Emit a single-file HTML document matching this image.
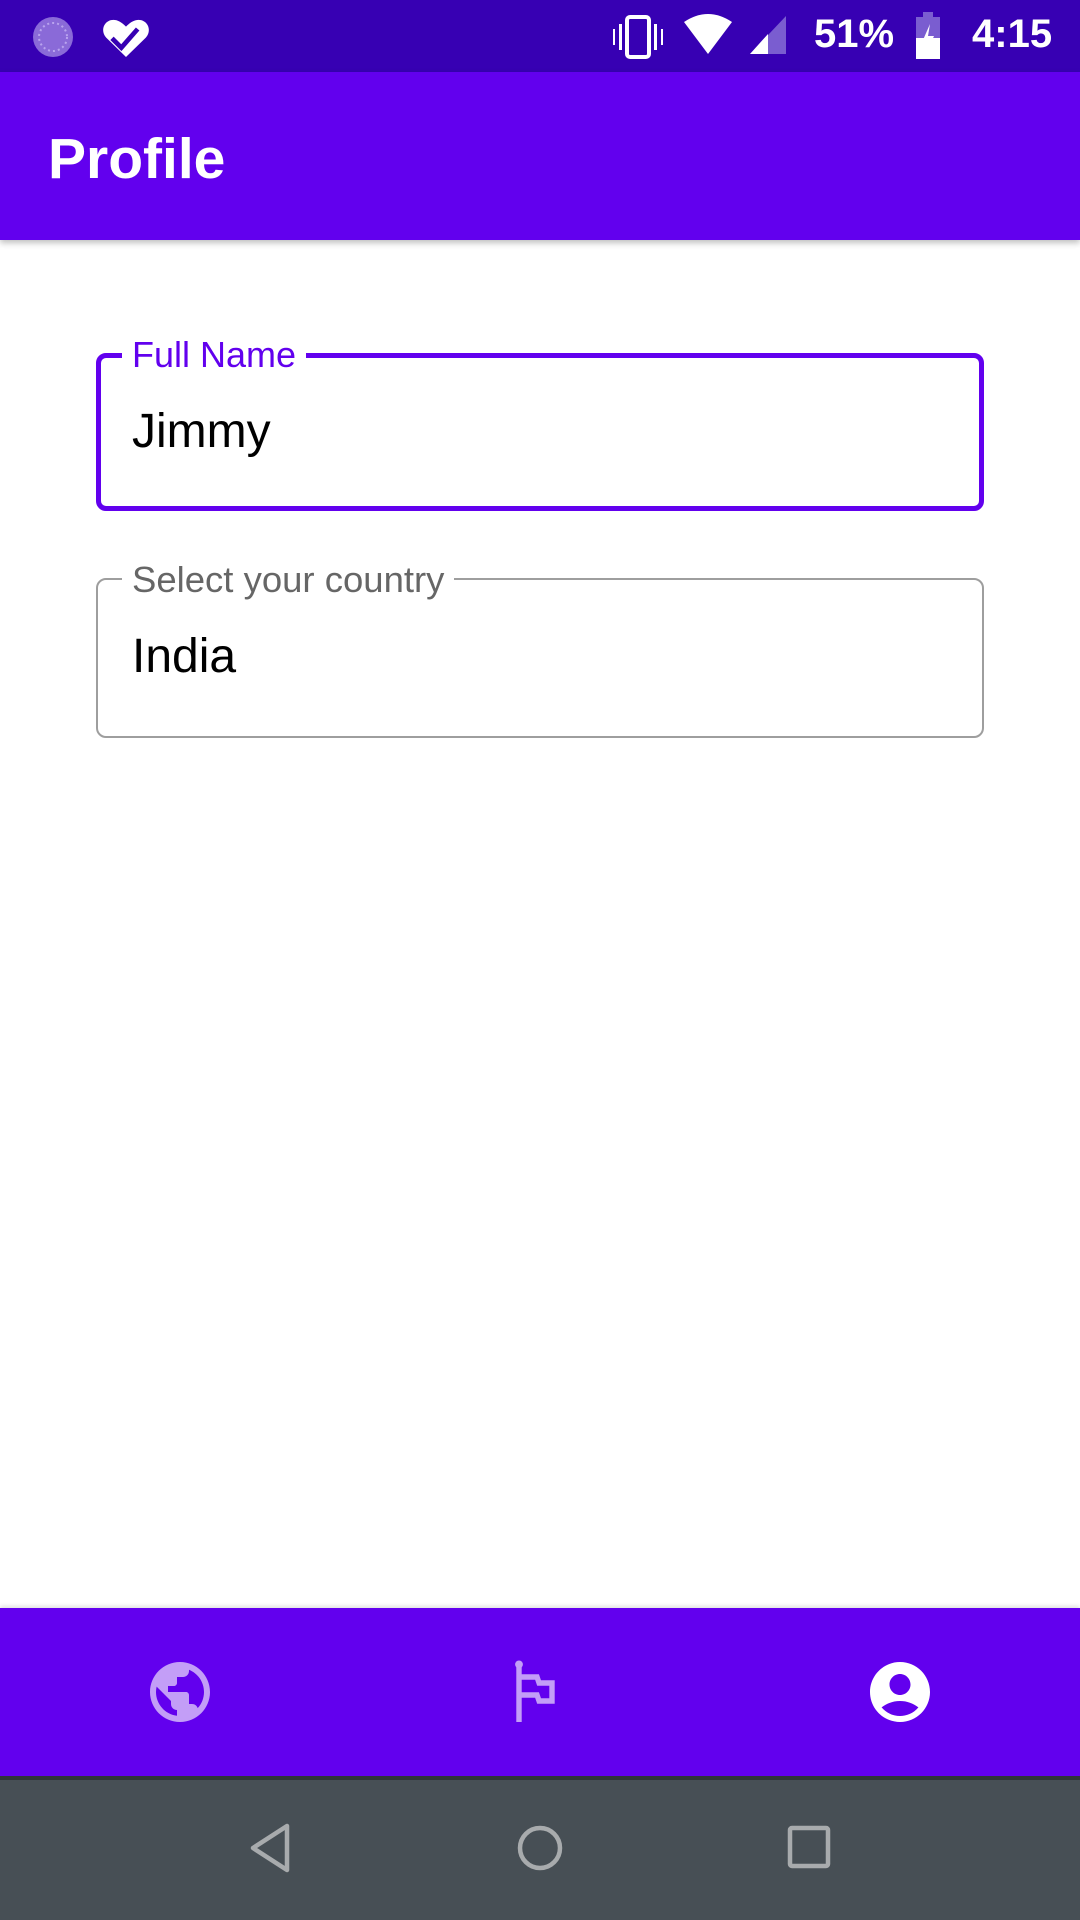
<!DOCTYPE html>
<html><head><meta charset="utf-8"><style>
*{margin:0;padding:0;box-sizing:border-box}
body{width:1080px;height:1920px;position:relative;background:#fff;font-family:"Liberation Sans",sans-serif;overflow:hidden}
.abs{position:absolute}
</style></head><body>
<div class="abs" style="left:0;top:0;width:1080px;height:72px;background:#3700b3"></div>
<svg class="abs" style="left:30px;top:14px" width="48" height="46" viewBox="0 0 48 46"><circle cx="23" cy="23" r="20" fill="#8a6ad8"/><circle cx="23" cy="23" r="14" fill="none" stroke="#b9a3ee" stroke-width="2" stroke-dasharray="2 3"/></svg>
<svg class="abs" style="left:96px;top:8px" width="60" height="56" viewBox="0 0 24 24"><path d="M12 21l-8.5-8.3C1.5 10.6 1.8 7 4.5 5.6 6.8 4.4 9.5 5.3 12 8c2.5-2.7 5.2-3.6 7.5-2.4 2.7 1.4 3 5 1 7.1z" fill="#fff"/><path d="M6 13l4 4 7-8" fill="none" stroke="#3700b3" stroke-width="2"/></svg>
<svg class="abs" style="left:610px;top:14px" width="56" height="46" viewBox="0 0 56 46"><rect x="17" y="3" width="22" height="40" rx="3" fill="none" stroke="#fff" stroke-width="4"/><rect x="9" y="10" width="3" height="26" fill="#fff"/><rect x="44" y="10" width="3" height="26" fill="#fff"/><rect x="3" y="15" width="2" height="16" fill="#fff"/><rect x="51" y="15" width="2" height="16" fill="#fff"/></svg>
<svg class="abs" style="left:682px;top:14px" width="52" height="42" viewBox="0 0 52 42"><path d="M2 8 Q26 -8 50 8 L26 40Z" fill="#fff"/></svg>
<svg class="abs" style="left:748px;top:14px" width="40" height="42" viewBox="0 0 40 42"><path d="M38 2V40H2Z" fill="#7a5dd0"/><path d="M20 20V40H2Z" fill="#fff"/></svg>
<div class="abs" style="left:814px;top:12px;font-size:40px;color:#fff;font-weight:bold">51%</div>
<svg class="abs" style="left:914px;top:12px" width="28" height="48" viewBox="0 0 28 48"><rect x="9" y="0" width="10" height="6" fill="#7a5dd0"/><rect x="2" y="5" width="24" height="42" fill="#7a5dd0"/><rect x="2" y="26" width="24" height="21" fill="#fff"/><path d="M16 12l-7 16h6l-3 14 8-18h-6z" fill="#fff"/></svg>
<div class="abs" style="left:972px;top:12px;font-size:40px;color:#fff;font-weight:bold">4:15</div>

<div class="abs" style="left:0;top:72px;width:1080px;height:168px;background:#6200ee;box-shadow:0 3px 6px rgba(0,0,0,.25)"></div>
<div class="abs" style="left:48px;top:124px;font-size:57px;line-height:70px;color:#fff;font-weight:bold">Profile</div>

<div class="abs" style="left:96px;top:353px;width:888px;height:158px;border:5px solid #6200ee;border-radius:10px"></div>
<div class="abs" style="left:122px;top:335px;padding:0 10px;background:#fff;font-size:36px;line-height:40px;color:#6200ee">Full Name</div>
<div class="abs" style="left:132px;top:404px;font-size:48px;line-height:56px;color:#000">Jimmy</div>

<div class="abs" style="left:96px;top:578px;width:888px;height:160px;border:2px solid #9e9e9e;border-radius:10px"></div>
<div class="abs" style="left:122px;top:560px;padding:0 10px;background:#fff;font-size:36.5px;line-height:40px;color:#666">Select your country</div>
<div class="abs" style="left:132px;top:629px;font-size:48px;line-height:56px;color:#000">India</div>

<div class="abs" style="left:0;top:1608px;width:1080px;height:168px;background:#6200ee;box-shadow:0 -2px 4px rgba(0,0,0,.12)"></div>
<svg class="abs" style="left:144px;top:1656px" width="72" height="72" viewBox="0 0 24 24"><path fill="#c39ef7" d="M12 2C6.48 2 2 6.48 2 12s4.48 10 10 10 10-4.48 10-10S17.52 2 12 2zm-1 17.93c-3.95-.49-7-3.85-7-7.93 0-.62.08-1.21.21-1.790L9 15v1c0 1.1.9 2 2 2v1.93zm6.9-2.54c-.26-.81-1-1.39-1.9-1.39h-1v-3c0-.55-.45-1-1-1H8v-2h2c.55 0 1-.45 1-1V7h2c1.1 0 2-.9 2-2v-.41c2.93 1.19 5 4.060 5 7.41 0 2.08-.8 3.97-2.1 5.39z"/></svg>
<svg class="abs" style="left:504px;top:1656px" width="72" height="72" viewBox="0 0 24 24"><circle cx="5" cy="2.8" r="1.3" fill="#c39ef7"/><path d="M5 3V22M5 7H11L11.7 9H16V15H11.7L11 13H5" fill="none" stroke="#c39ef7" stroke-width="1.8"/></svg>
<svg class="abs" style="left:864px;top:1656px" width="72" height="72" viewBox="0 0 24 24"><path fill="#fff" d="M12 2C6.48 2 2 6.48 2 12s4.48 10 10 10 10-4.48 10-10S17.52 2 12 2zm0 4c1.93 0 3.5 1.57 3.5 3.5S13.93 13 12 13s-3.5-1.57-3.5-3.5S10.07 6 12 6zm0 14c-2.03 0-4.43-.82-6.14-2.88C7.550 15.8 9.68 15 12 15s4.45.8 6.14 2.12C16.43 19.18 14.03 20 12 20z"/></svg>

<div class="abs" style="left:0;top:1776px;width:1080px;height:4px;background:#2f3538"></div>
<div class="abs" style="left:0;top:1780px;width:1080px;height:140px;background:#474f55"></div>
<svg class="abs" style="left:245px;top:1822px" width="50" height="52" viewBox="0 0 50 52"><path d="M42 4V48L8 26Z" fill="none" stroke="#a8abad" stroke-width="4.5" stroke-linejoin="round"/></svg>
<svg class="abs" style="left:514px;top:1822px" width="52" height="52" viewBox="0 0 52 52"><circle cx="26" cy="26" r="20" fill="none" stroke="#a8abad" stroke-width="4.5"/></svg>
<svg class="abs" style="left:786px;top:1824px" width="48" height="48" viewBox="0 0 48 48"><rect x="4" y="4" width="38" height="38" rx="2" fill="none" stroke="#a8abad" stroke-width="4.5"/></svg>
</body></html>
